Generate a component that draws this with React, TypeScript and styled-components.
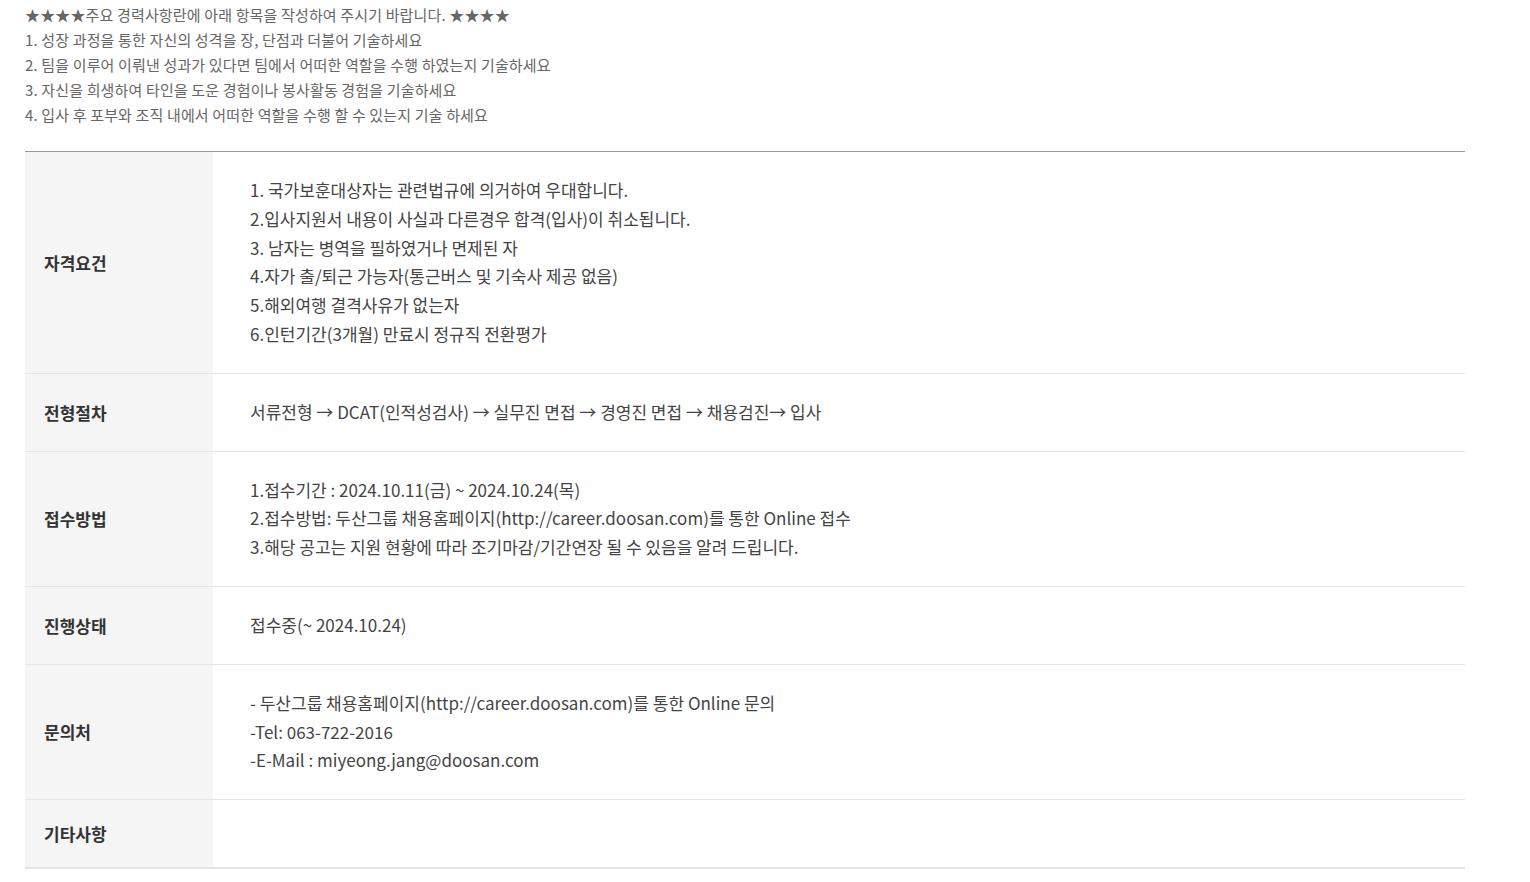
import React from 'react'
import styled, { createGlobalStyle } from 'styled-components'

const GlobalStyle = createGlobalStyle`
  html, body {
    margin: 0;
    padding: 0;
    background: #fff;
  }
  body {
    font-family: "Noto Sans CJK KR", "Noto Sans", sans-serif;
    color: #333;
  }
`

interface IInfoRow {
  label: string
  lines: string[]
}

const GUIDE_LINES = [
  '★★★★주요 경력사항란에 아래 항목을 작성하여 주시기 바랍니다. ★★★★',
  '1. 성장 과정을 통한 자신의 성격을 장, 단점과 더불어 기술하세요',
  '2. 팀을 이루어 이뤄낸 성과가 있다면 팀에서 어떠한 역할을 수행 하였는지 기술하세요',
  '3. 자신을 희생하여 타인을 도운 경험이나 봉사활동 경험을 기술하세요',
  '4. 입사 후 포부와 조직 내에서 어떠한 역할을 수행 할 수 있는지 기술 하세요',
]

const INFO_ROWS: IInfoRow[] = [{
  label: '자격요건',
  lines: [
    '1. 국가보훈대상자는 관련법규에 의거하여 우대합니다.',
    '2.입사지원서 내용이 사실과 다른경우 합격(입사)이 취소됩니다.',
    '3. 남자는 병역을 필하였거나 면제된 자',
    '4.자가 출/퇴근 가능자(통근버스 및 기숙사 제공 없음)',
    '5.해외여행 결격사유가 없는자',
    '6.인턴기간(3개월) 만료시 정규직 전환평가',
  ]
}, {
  label: '전형절차',
  lines: ['서류전형 → DCAT(인적성검사) → 실무진 면접 → 경영진 면접 → 채용검진→ 입사']
}, {
  label: '접수방법',
  lines: [
    '1.접수기간 : 2024.10.11(금) ~ 2024.10.24(목)',
    '2.접수방법: 두산그룹 채용홈페이지(http://career.doosan.com)를 통한 Online 접수',
    '3.해당 공고는 지원 현황에 따라 조기마감/기간연장 될 수 있음을 알려 드립니다.',
  ]
}, {
  label: '진행상태',
  lines: ['접수중(~ 2024.10.24)']
}, {
  label: '문의처',
  lines: [
    '- 두산그룹 채용홈페이지(http://career.doosan.com)를 통한 Online 문의',
    '-Tel: 063-722-2016',
    '-E-Mail : miyeong.jang@doosan.com',
  ]
}, {
  label: '기타사항',
  lines: []
}]

const Page = styled.div`
  padding: 2px 25px 14px;
`

const Guide = styled.div`
  font-size: 15px;
  line-height: 25px;
  color: #666;
  letter-spacing: 0.01em;
  margin-bottom: 24px;
`

const Table = styled.div`
  width: 1440px;
  border-top: 1px solid #999;
  border-bottom: 2px solid #e5e5e5;
`

const Row = styled.div<{ $last?: boolean }>`
  display: grid;
  grid-template-columns: 188px 1fr;
  border-bottom: ${p => (p.$last ? 'none' : '1px solid #e5e5e5')};
`

const Label = styled.div`
  display: flex;
  align-items: center;
  padding-left: 19px;
  background: #f5f5f5;
  font-size: 17px;
  font-weight: 700;
  color: #333;
`

const Content = styled.div<{ $empty?: boolean }>`
  padding: 24px 37px;
  min-height: ${p => (p.$empty ? '19px' : '0')};
  font-size: 17px;
  line-height: 28.8px;
  color: #444;
`

export default function App() {
  return (
    <Page>
      <GlobalStyle />
      <Guide>
        {GUIDE_LINES.map(line => <div key={line}>{line}</div>)}
      </Guide>
      <Table>
        {INFO_ROWS.map((row, i) =>
          <Row key={row.label} $last={i === INFO_ROWS.length - 1}>
            <Label>{row.label}</Label>
            <Content $empty={row.lines.length === 0}>
              {row.lines.map(line => <div key={line}>{line}</div>)}
            </Content>
          </Row>
        )}
      </Table>
    </Page>
  )
}
